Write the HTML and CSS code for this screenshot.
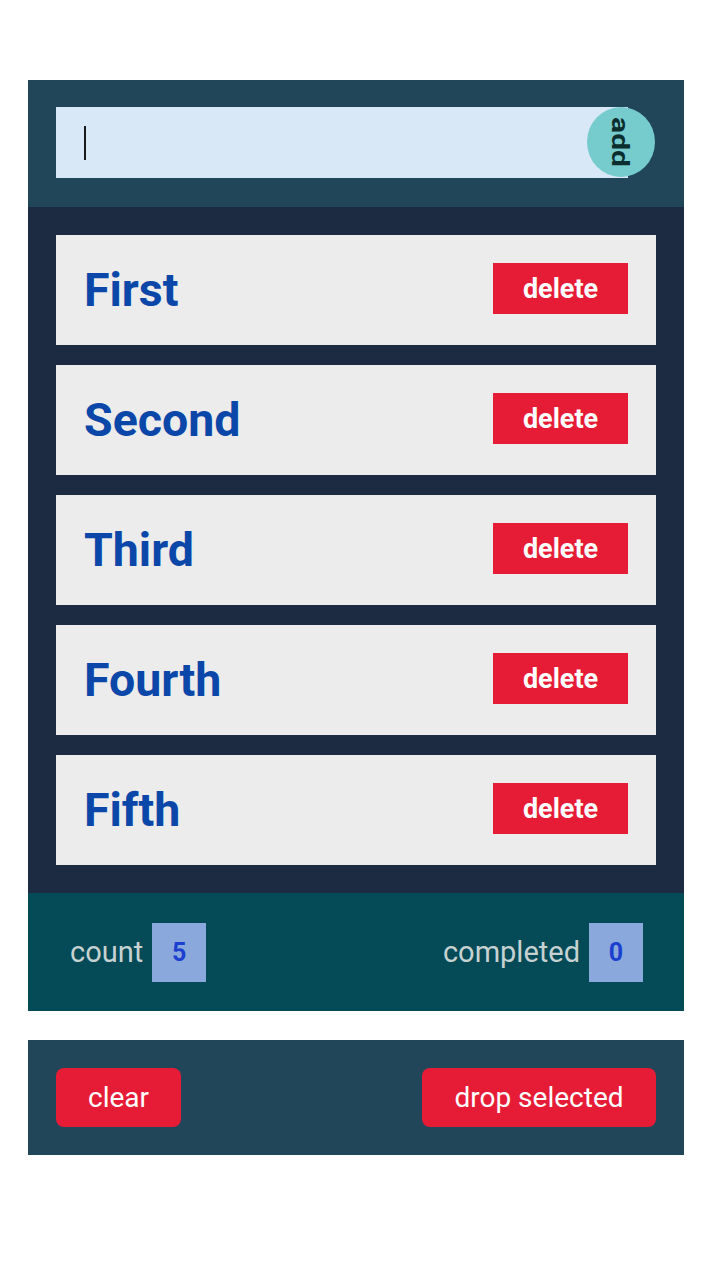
FILE: index.html
```html
<!DOCTYPE html>
<html>
<head>
<meta charset="utf-8">
<link rel="stylesheet" href="styles.css">
</head>
<body>
<div class="page">
  <div class="card">
    <div class="entry">
      <div class="field"><span class="caret"></span></div>
      <button class="add"><span>add</span></button>
    </div>
    <ul class="list">
      <li class="item"><span class="name">First</span><button class="del">delete</button></li>
      <li class="item"><span class="name">Second</span><button class="del">delete</button></li>
      <li class="item"><span class="name">Third</span><button class="del">delete</button></li>
      <li class="item"><span class="name">Fourth</span><button class="del">delete</button></li>
      <li class="item"><span class="name">Fifth</span><button class="del">delete</button></li>
    </ul>
    <div class="stats">
      <div class="stat"><span class="label">count</span><span class="badge">5</span></div>
      <div class="stat"><span class="label">completed</span><span class="badge">0</span></div>
    </div>
  </div>
  <div class="actions">
    <button class="btn btn-clear">clear</button>
    <button class="btn btn-drop">drop selected</button>
  </div>
</div>
</body>
</html>
```
FILE: styles.css
```css
* { box-sizing: border-box; }
html, body { margin: 0; padding: 0; background: #ffffff; }
body { font-family: Roboto, "Liberation Sans", sans-serif; }
.page { padding: 80px 28px 0 28px; display: flex; flex-direction: column; gap: 29px; }
.card { display: flex; flex-direction: column; }
.entry {
  background: #21465a;
  padding: 27px 28px 0 28px;
  height: 127px;
  display: flex;
  align-items: flex-start;
  position: relative;
}
.field {
  flex: 1;
  height: 71px;
  background: #d8e8f7;
  margin-right: 28px;
  display: flex;
  align-items: center;
  padding-left: 28px;
}
.caret { width: 2px; height: 34px; background: #1a1a1a; }
.add {
  position: absolute;
  right: 29px;
  top: 27px;
  width: 68px;
  height: 70px;
  border-radius: 50%;
  border: none;
  background: #76cbcc;
  padding: 0;
  display: flex;
  align-items: center;
  justify-content: center;
  font-family: Roboto, sans-serif;
}
.add span {
  display: block;
  transform: rotate(90deg) scaleY(0.78);
  font-size: 30px;
  font-weight: 700;
  color: #0b2e2e;
  line-height: 1;
  margin-left: -3px;
}
.list {
  list-style: none;
  margin: 0;
  padding: 28px;
  background: #1c2a42;
  display: flex;
  flex-direction: column;
  gap: 20px;
}
.item {
  background: #ececec;
  height: 110px;
  display: flex;
  align-items: center;
  justify-content: space-between;
  padding: 0 28px 0 28px;
}
.name { font-size: 46.5px; font-weight: 700; color: #0b47a8; }
.del {
  width: 135px;
  height: 51px;
  border: none;
  background: #e61c36;
  color: #ffffff;
  font-family: Roboto, sans-serif;
  font-weight: 700;
  font-size: 27px;
  padding: 0;
  margin-top: -3px;
}
.stats {
  background: #054a57;
  height: 118px;
  padding: 0 41px 0 42px;
  display: flex;
  align-items: center;
  justify-content: space-between;
}
.stat { display: flex; align-items: center; gap: 9px; }
.label { font-size: 29px; color: #c6d2d2; }
.badge {
  width: 54px;
  height: 59px;
  background: #8aa8dc;
  color: #1b3fcf;
  font-weight: 700;
  font-size: 25px;
  display: flex;
  align-items: center;
  justify-content: center;
}
.actions {
  background: #21465a;
  padding: 28px;
  height: 115px;
  display: flex;
  align-items: center;
  justify-content: space-between;
}
.btn {
  height: 59px;
  border: none;
  border-radius: 8px;
  background: #e61c36;
  color: #ffffff;
  font-family: Roboto, sans-serif;
  font-size: 28px;
  padding: 0;
}
.btn-clear { width: 125px; }
.btn-drop { width: 234px; }
```
